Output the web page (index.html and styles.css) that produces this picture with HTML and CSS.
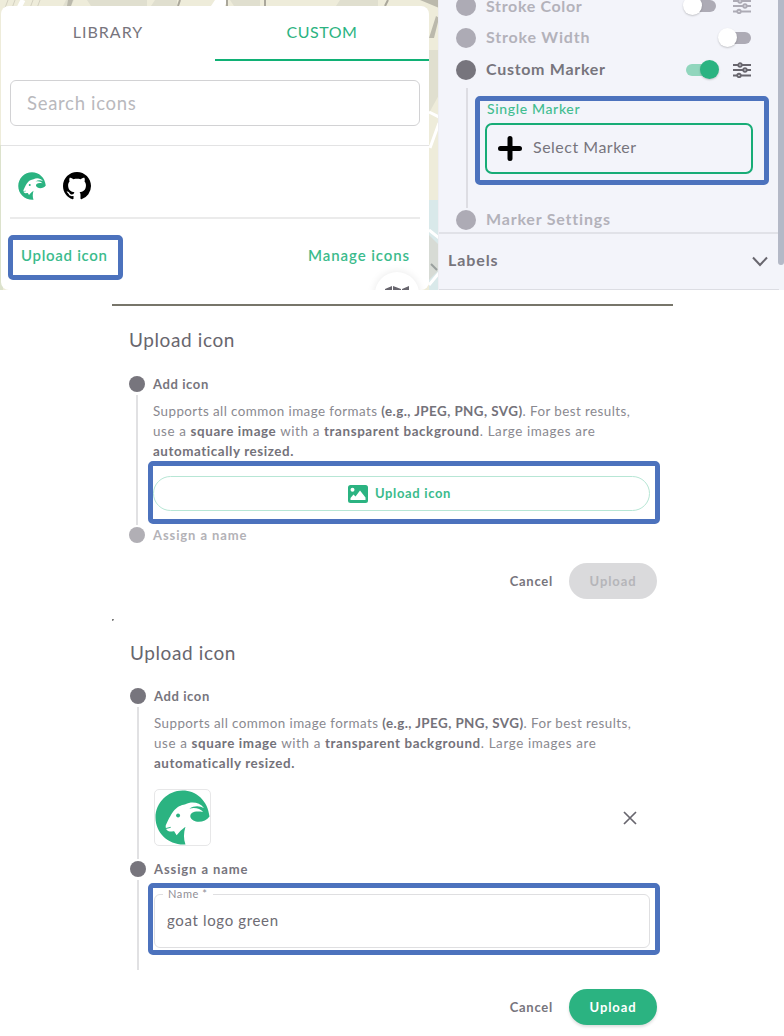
FILE: index.html
```
<!DOCTYPE html>
<html lang="en">
<head>
<meta charset="utf-8">
<title>Upload icon</title>
<link rel="stylesheet" href="styles.css">
</head>
<body>
<svg class="defs" width="0" height="0" aria-hidden="true">
  <symbol id="goat" viewBox="0 0 56 56">
    <path fill="#2bb381" d="M31 55.500C14 56.500 .5 44 .5 28C.5 13 13 .5 28 .5C42 .5 54 11 55.500 27C51 34 38 34 36 27.500C35.500 23 40 21 49 22.500C46 18.500 40 17.500 35 19C40 15.500 46 16 50 18.500C45 12 37 11.500 31 14.500C21 16.500 18 21 11 36C10.500 39 11.500 41 14 42C17 43 18 41.500 19.500 42L22 46L26 41.500L31 37.500C29 44 29 50 31 55.500Z"/>
    <circle cx="23.500" cy="26" r="2" fill="#2bb381"/>
    <path d="M10 39.500l6-1.500" stroke="#2bb381" stroke-width="1"/>
  </symbol>
  <symbol id="tune" viewBox="0 0 18 16">
    <g fill="none" stroke="currentColor" stroke-width="1.900">
      <path d="M0 3h5M9 3h9M0 8h10M14 8h4M0 13.500h4M8 13.500h10"/>
      <circle cx="7" cy="3" r="1.700"/><circle cx="12" cy="8" r="1.700"/><circle cx="6" cy="13.500" r="1.700"/>
    </g>
  </symbol>
</svg>
<main class="page">
  <section class="editor">
    <div class="map">
      <svg class="tiles" width="439" height="290" aria-hidden="true">
        <rect width="439" height="290" fill="#eeecda"/>
        <path d="M66 0h8l-3 6h-8zM155 0h22v6h-26zM87 0h60v6H91zM230 0h30v6h-26zM340 0h38v6h-42zM429 50h10v45l-10 18z" fill="#e0dfcf"/>
        <path d="M23 0l-4 8M218 0h7l-3 6h-8z" stroke="#fff" fill="#fff" stroke-width="5"/>
        <path d="M8 0L5 8M15 0l-3 8M33 0l-3 8M40 0l-3 8" stroke="#d3d0c0" fill="none"/>
        <path d="M180 0l-2 6M227 0v6M265 0v6M388 0l-3 6" stroke="#aaa79b" stroke-width="2" fill="none"/>
        <path d="M68 0h5l-2 6h-4zM420 0h19v8zM436 16l3 2-5 20h-5z" fill="#bbb9ac"/>
        <path d="M429 112l10 5M430 148l9-25" stroke="#fff" stroke-width="3"/>
        <path d="M0 145h3v145H0z" fill="#dce2cc"/>
        <path d="M429 200h10v90h-10z" fill="#d9e9ea"/>
        <path d="M429 235l10 10v25l-10 10z" fill="#d7dbd5"/>
        <path d="M429 230l10 8M429 285l10-12" stroke="#fff" stroke-width="3"/>
        <path d="M431 264l6 6" stroke="#999f9d" stroke-width="2"/>
      </svg>
      <div class="picker">
        <div class="tabs"><div class="tab"><span class="t-library">LIBRARY</span></div><div class="tab active"><span class="t-custom">CUSTOM</span></div></div>
        <div class="search"><span class="t-search">Search icons</span></div>
        <div class="icons">
          <svg width="28" height="28"><use href="#goat"/></svg>
          <svg width="28" height="28" viewBox="0 0 16 16"><path d="M8 0C3.580 0 0 3.580 0 8c0 3.540 2.290 6.530 5.470 7.590.4.070.55-.17.55-.38 0-.19-.01-.82-.01-1.490-2.010.37-2.530-.49-2.690-.94-.09-.23-.48-.94-.82-1.130-.28-.15-.68-.52-.01-.53.63-.01 1.080.58 1.230.82.72 1.210 1.870.87 2.330.66.07-.52.28-.87.51-1.070-1.780-.2-3.640-.89-3.640-3.950 0-.87.31-1.590.82-2.150-.08-.2-.36-1.020.08-2.120 0 0 .67-.21 2.200.82.64-.18 1.320-.27 2-.27s1.360.09 2 .27c1.530-1.040 2.200-.82 2.200-.82.44 1.100.16 1.920.08 2.120.51.56.82 1.270.82 2.150 0 3.070-1.870 3.750-3.650 3.950.29.25.54.73.54 1.480 0 1.070-.01 1.930-.01 2.200 0 .21.150.46.55.38A8.010 8.010 0 0 0 16 8c0-4.420-3.580-8-8-8z"/></svg>
        </div>
        <div class="links"><span class="t-uplink">Upload icon</span><span class="t-manage">Manage icons</span></div>
        <div class="map-button"><svg width="26" height="20" viewBox="0 0 26 20"><path d="M1 3l7-3v20H1zM9 0l8 3v17H9zM18 3l7-3v20h-7z" fill="#68666e"/></svg></div>
      </div>
      <div class="mark mark-link"></div>
    </div>
    <aside class="style-panel">
      <div class="settings">
        <div class="row row-color off"><i class="dot"></i><span class="t-scolor">Stroke Color</span><b class="toggle color-toggle"></b><svg class="tune" width="18" height="16"><use href="#tune"/></svg></div>
        <div class="row row-width off"><i class="dot"></i><span class="t-swidth">Stroke Width</span><b class="toggle last"></b></div>
        <div class="row row-marker"><i class="dot"></i><span class="t-cmarker">Custom Marker</span><b class="toggle on"></b><svg class="tune" width="18" height="16"><use href="#tune"/></svg></div>
        <div class="marker-body">
          <div class="marker-field">
            <div class="marker-label"><span class="t-single">Single Marker</span></div>
            <div class="marker-select"><svg width="24" height="25" viewBox="0 0 24 25"><path d="M12 2.500v20M2.500 12.500h19" stroke="#000" stroke-width="5" stroke-linecap="round"/></svg><span class="t-select">Select Marker</span></div>
          </div>
        </div>
        <div class="row row-settings off"><i class="dot"></i><span class="t-msettings">Marker Settings</span></div>
      </div>
      <div class="labels"><span class="t-labels">Labels</span><svg width="16" height="11" viewBox="0 0 16 11" fill="none" stroke="#68666e" stroke-width="2"><path d="M1 1.500l7 7.500 7-7.500"/></svg></div>
      <div class="scrollbar"></div>
      <div class="mark mark-marker"></div>
    </aside>
  </section>

  <section class="dialog first">
    <div class="strip"></div>
    <h2><span class="t-title">Upload icon</span></h2>
    <div class="step"><div class="rail"><i class="dot"></i><i class="line"></i></div>
      <div class="content">
        <h3><span class="t-add">Add icon</span></h3>
        <p><span class="t-l1">Supports all common image formats <b>(e.g., JPEG, PNG, SVG)</b>. For best results,</span><br><span class="t-l2">use a <b>square image</b> with a <b>transparent background</b>. Large images are</span><br><span class="t-l3"><b>automatically resized.</b></span></p>
        <div class="upload-area"><svg width="20" height="18" viewBox="0 0 20 18"><rect width="20" height="18" rx="2.500" fill="#2bb381"/><circle cx="4.500" cy="4.800" r="2" fill="#fff"/><path d="M2.500 15v-2l3-3.500 2 2 4.500-6 5.500 7V15z" fill="#fff"/></svg><span class="t-upbtn">Upload icon</span></div>
      </div>
    </div>
    <div class="step muted"><div class="rail"><i class="dot"></i></div><div class="content"><h3><span class="t-assign">Assign a name</span></h3></div></div>
    <footer><span class="t-cancel">Cancel</span><div class="submit disabled"><span class="t-submit">Upload</span></div></footer>
    <div class="mark mark-upload"></div>
  </section>

  <section class="dialog second">
    <div class="corner"></div>
    <h2><span class="t-title">Upload icon</span></h2>
    <div class="step step-icon"><div class="rail"><i class="dot"></i><i class="line"></i></div>
      <div class="content">
        <h3><span class="t-add">Add icon</span></h3>
        <p><span class="t-l1">Supports all common image formats <b>(e.g., JPEG, PNG, SVG)</b>. For best results,</span><br><span class="t-l2">use a <b>square image</b> with a <b>transparent background</b>. Large images are</span><br><span class="t-l3"><b>automatically resized.</b></span></p>
        <div class="preview"><div class="thumb"><svg width="55" height="55"><use href="#goat"/></svg></div><svg width="14" height="14" viewBox="0 0 14 14" stroke="#68666e" stroke-width="1.700"><path d="M1 1l12 12M13 1L1 13"/></svg></div>
      </div>
    </div>
    <div class="step step-name"><div class="rail"><i class="dot"></i><i class="line"></i></div>
      <div class="content">
        <h3><span class="t-assign">Assign a name</span></h3>
        <fieldset><legend><span class="t-name">Name *</span></legend><span class="t-value">goat logo green</span></fieldset>
      </div>
    </div>
    <footer><span class="t-cancel">Cancel</span><div class="submit"><span class="t-submit">Upload</span></div></footer>
    <div class="mark mark-name"></div>
  </section>
</main>
</body>
</html>
```
FILE: styles.css
```
* { box-sizing: border-box; }
body { margin: 0; background: #fff; font-family: Lato, "Open Sans", sans-serif; color: #77757d; }
svg { display: block; flex: none; }
.defs { position: absolute; }
.page { width: 784px; height: 1036px; overflow: hidden; }
span { white-space: nowrap; }
.mark { position: absolute; border: 5px solid #4c72bd; border-radius: 5px; }

.editor { display: flex; height: 290px; }
.map { position: relative; width: 438px; height: 290px; padding: 6px 0 0 1px; overflow: hidden; }
.tiles { position: absolute; left: 0; top: 0; }
.picker { position: relative; width: 428px; height: 284px; background: #fff; border-radius: 8px; overflow: hidden; }
.tabs { display: flex; height: 55px; }
.tab { flex: 1; display: flex; align-items: center; justify-content: center; font-size: 16px; padding-bottom: 4px; }
.tab.active { color: #2bb381; border-bottom: 2px solid #10b175; padding-bottom: 2px; }
.search { height: 46px; margin: 19px 9px 18px; border: 1px solid #d2d2d4; border-radius: 6px; padding: 0 0 1px 16px; display: flex; align-items: center; font-size: 18.500px; color: #b9b9bd; }
.icons { height: 75px; margin: 0 9px; border-bottom: 2px solid #ebebeb; display: flex; align-items: center; gap: 17px; padding: 11px 0 0 8px; position: relative; }
.icons::before { content: ""; position: absolute; top: 1px; left: -9px; width: 428px; height: 1px; background: #e3e3e4; }
.links { display: flex; justify-content: space-between; align-items: center; height: 71px; padding: 0 19px 0 20px; font-size: 15px; font-weight: 600; color: #3bbb8c; }
.map-button { position: absolute; left: 374px; top: 266px; width: 44px; height: 44px; border-radius: 50%; background: #fff; box-shadow: 0 0 8px #00000018; display: flex; justify-content: center; padding-top: 14px; }
.mark-link { left: 8px; top: 235px; width: 115px; height: 45px; }

.style-panel { position: relative; flex: 1; height: 290px; background: #f3f4fa; overflow: hidden; border-left: 1px solid #eeeef3; }
.settings { height: 244px; width: 340px; margin-top: -10px; border-bottom: 2px solid #e1e2e8; }
.row { display: flex; align-items: center; gap: 9px; height: 32px; padding: 0 28px 0 18px; font-size: 16px; font-weight: 700; }
.row span { line-height: 14px; padding-bottom: 2px; }
.row-color span { line-height: 11px; }
.row .dot { width: 20px; height: 20px; margin-left: -1px; }
.dot { display: block; flex: none; border-radius: 50%; background: #77757d; }
.row .dot + span { margin-left: 1px; }
.off { color: #b3b2ba; }
.off .dot { background: #adabb5; }
.tune { color: #68666e; }
.off .tune { color: #adabb5; }
.toggle { position: relative; margin-left: auto; margin-right: 5px; width: 33px; height: 20px; display: flex; align-items: center; }
.toggle.last { margin-right: 0; }
.toggle.color-toggle { margin-right: 8px; }
.toggle::before { content: ""; height: 12px; width: 24px; margin-left: 9px; border-radius: 6px; background: #adabb5; }
.toggle::after { content: ""; position: absolute; left: 0; top: 0; width: 19px; height: 19px; border-radius: 50%; background: #fff; box-shadow: 0 1px 2px #0003; }
.toggle.on::before { margin-left: 0; width: 30px; background: #91d6bd; }
.toggle.on::after { left: 14px; background: #2bb381; }
.marker-body { display: flex; height: 120px; margin: 2px 0 0 27px; border-left: 2px solid #dddde3; padding-left: 17px; }
.marker-field { width: 268px; padding-top: 11px; }
.marker-label { height: 24px; display: flex; align-items: center; padding: 0 0 6px 2px; font-size: 14px; font-weight: 500; color: #42bd90; }
.marker-select { display: flex; align-items: center; gap: 11px; height: 51px; padding: 0 11px 1px; border: 2px solid #17ac76; border-radius: 7px; font-size: 16px; }
.marker-select span { padding-bottom: 4px; }
.row-settings { height: 24px; }
.labels { display: flex; align-items: center; justify-content: space-between; width: 340px; height: 56px; padding: 0 11px 0 9px; border-bottom: 1px solid #dcdde3; font-size: 16px; font-weight: 700; }
.labels span { padding-bottom: 4px; }
.scrollbar { position: absolute; right: 0; top: 0; width: 6px; height: 265px; background: #b4b9c7; border-radius: 0 0 3px 3px; }
.mark-marker { left: 36px; top: 96px; width: 294px; height: 89px; }

.dialog { position: relative; width: 561px; margin-left: 112px; padding: 0 16px 0 17px; }
.first { height: 315px; margin-top: 14px; }
.second { height: 416px; }
.dialog h2, .dialog h3, .dialog p { margin: 0; }
.strip { height: 2px; margin: 0 -16px 0 -17px; background: #77756a; }
.corner { width: 2px; height: 2px; margin-left: -17px; background: #777; border-bottom-right-radius: 2px; }
h2 { height: 68px; display: flex; align-items: center; padding-bottom: 2px; font-size: 19px; font-weight: 400; color: #68666e; }
.step { display: flex; gap: 8px; }
.rail { width: 16px; display: flex; flex-direction: column; align-items: center; }
.rail .dot { width: 16px; height: 16px; margin: 2px 0 3px; }
.line { flex: 1; width: 2px; background: #e1e1e3; }
.content { width: 497px; }
h3 { height: 20px; display: flex; align-items: center; padding-bottom: 1px; font-size: 13px; font-weight: 700; color: #77757d; }
.dialog p { height: 60px; margin-top: 8px; font-size: 13.400px; line-height: 19.800px; color: #8a8990; }
.dialog p b { color: #74727a; font-weight: 700; }
.upload-area { height: 35px; margin-top: 14px; display: flex; align-items: center; justify-content: center; gap: 7px; padding-right: 4px; border: 1.500px solid #b7e6d5; border-radius: 18px; font-size: 13px; font-weight: 700; color: #3bbb8c; }
.upload-area span { padding-bottom: 2px; }
.first .step:not(.muted) { height: 151px; }
.muted h3 { color: #b3b2b7; }
.muted .dot { background: #b1afb5; }
footer { display: flex; align-items: center; justify-content: flex-end; gap: 16px; height: 36px; margin-top: 17px; font-size: 13px; font-weight: 700; }
.submit { width: 88px; height: 36px; border-radius: 18px; display: flex; align-items: center; justify-content: center; padding-bottom: 1px; background: #2bb381; color: #fff; box-shadow: 0 2px 3px #0002; }
.submit.disabled { background: #dadadc; color: #b5b5b9; box-shadow: none; }
.mark-upload { left: 36px; top: 157px; width: 512px; height: 63px; }
.second .step, .second h2 { margin-left: 1px; }
.second h2 { height: 65px; padding-bottom: 2px; }
.step-icon { height: 173px; }
.preview { display: flex; align-items: center; justify-content: space-between; margin-top: 15px; padding-right: 14px; }
.thumb { width: 57px; height: 57px; border: 1px solid #e7e7e8; border-radius: 5px; overflow: hidden; }
.step-name { height: 111px; }
.second footer { margin-top: 19px; }
fieldset { height: 61px; margin: 8px 0 0; padding: 10px 0 0 12px; border: 1.500px solid #dfdfe1; border-radius: 6px; width: 496px; font-size: 15px; color: #6e6c74; }
legend { padding: 0 5px; margin-left: -4px; height: 14px; line-height: 14px; font-size: 11px; color: #8f8e95; }
.mark-name { left: 36px; top: 264px; width: 512px; height: 72px; }

.t-library { letter-spacing: 1px; }
.t-custom { letter-spacing: .55px; }
.t-search { letter-spacing: .7px; }
.t-uplink { letter-spacing: .7px; }
.t-manage { letter-spacing: .9px; }
.t-scolor { letter-spacing: .65px; }
.t-swidth { letter-spacing: .8px; }
.t-cmarker { letter-spacing: .7px; }
.t-single { letter-spacing: .65px; }
.t-select { letter-spacing: .5px; }
.t-msettings { letter-spacing: .8px; }
.t-labels { letter-spacing: .9px; }
.t-title { letter-spacing: .6px; }
.t-add { letter-spacing: .6px; }
.t-assign { letter-spacing: .9px; }
.t-upbtn { letter-spacing: .65px; }
.t-cancel { letter-spacing: .75px; }
.t-submit { letter-spacing: .9px; }
.t-name { letter-spacing: .6px; }
.t-value { letter-spacing: .65px; }
.t-l1 { letter-spacing: .43px; }
.t-l2 { letter-spacing: .61px; }
.t-l3 { letter-spacing: .57px; }
```
